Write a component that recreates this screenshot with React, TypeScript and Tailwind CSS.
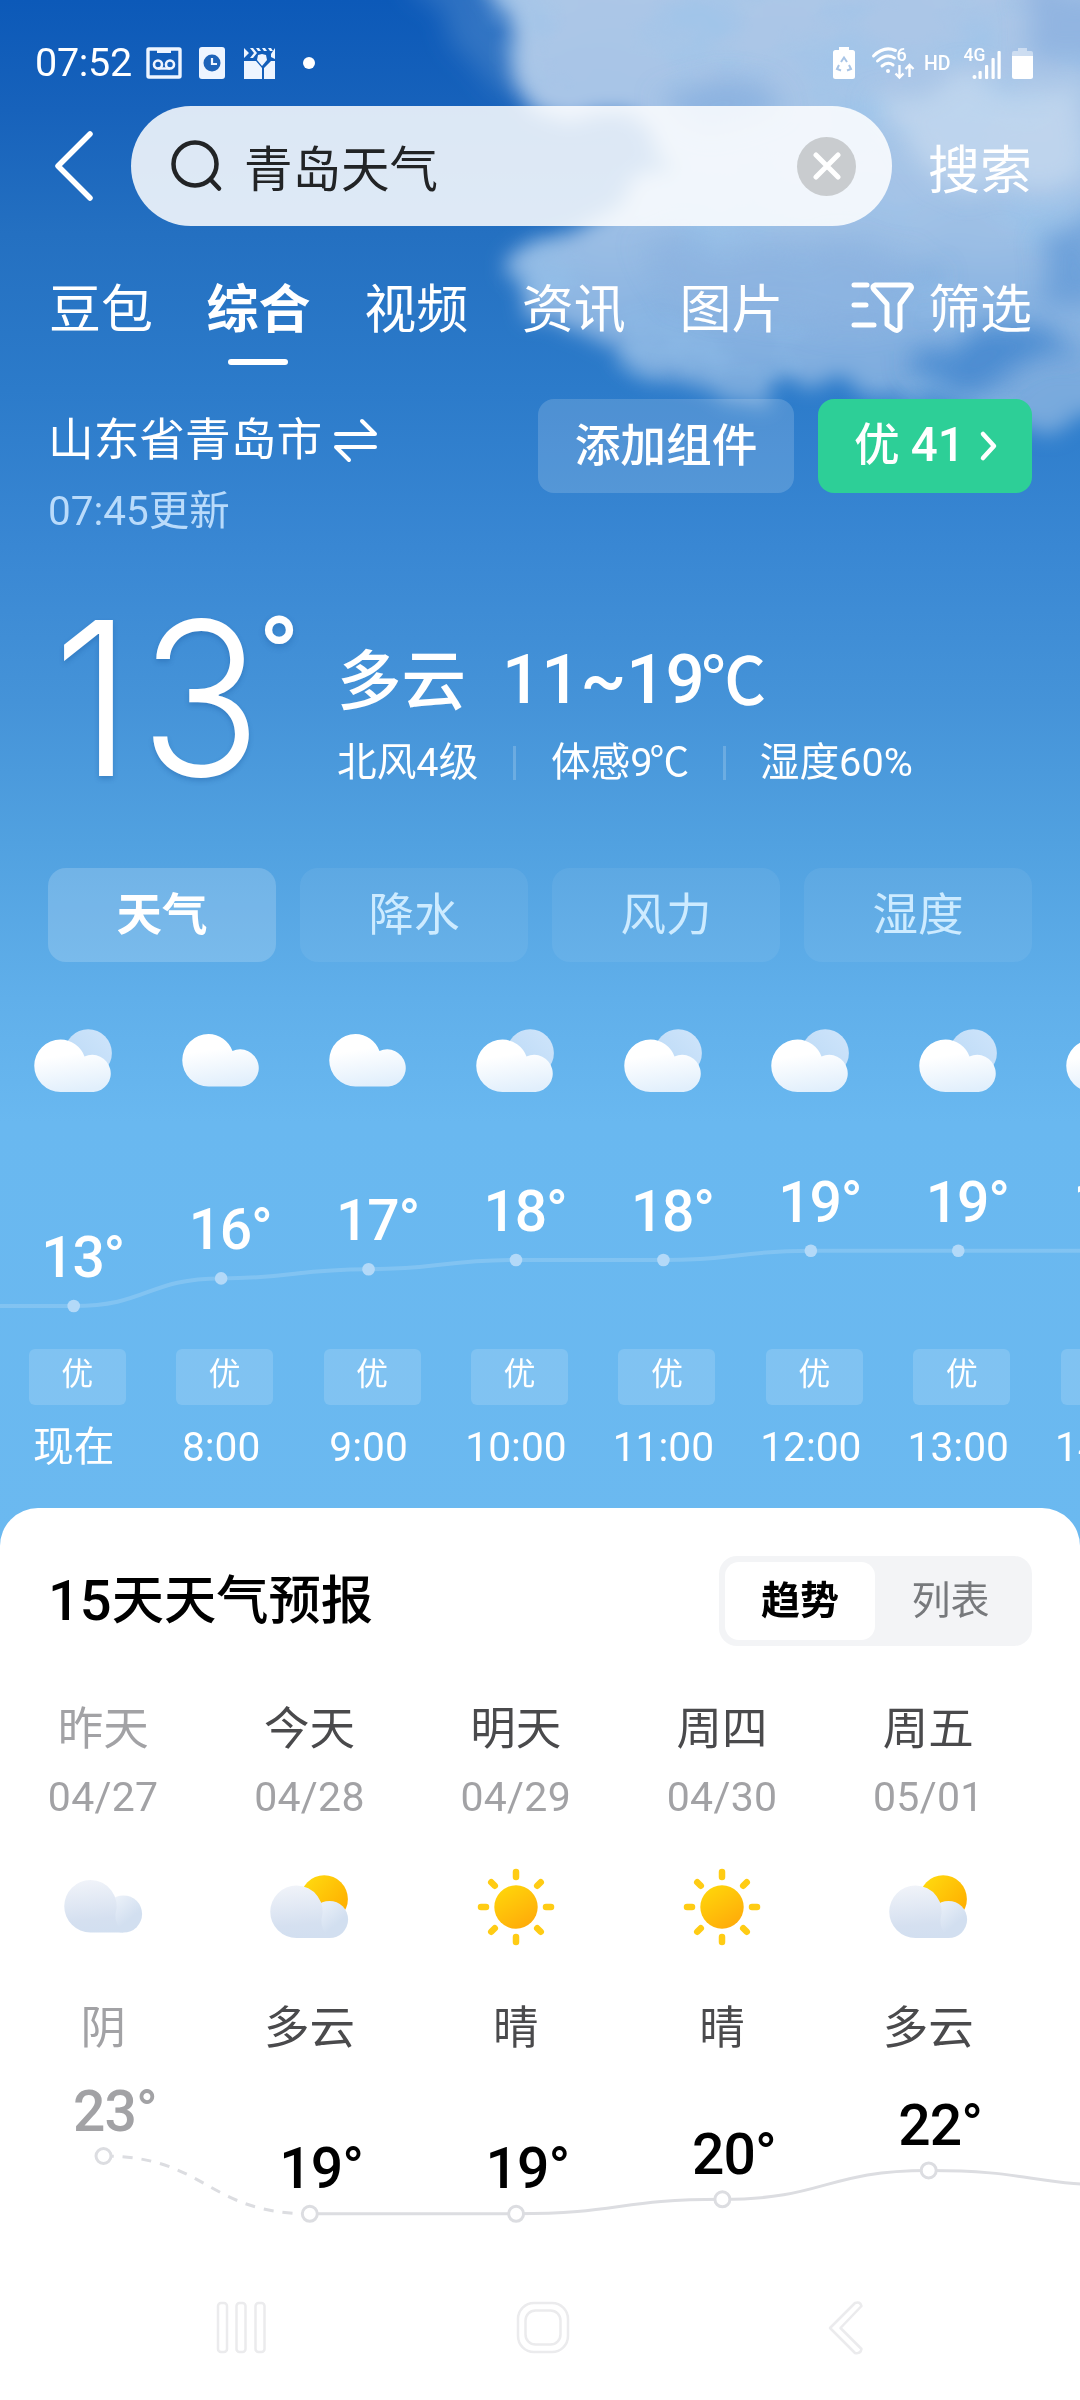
import clsx from 'clsx'

const tabs = ['豆包', '综合', '视频', '资讯', '图片']
const metrics = ['天气', '降水', '风力', '湿度']

type HourIcon = 'cloudy' | 'overcast'

const hours: { label: string; temp: number; icon: HourIcon }[] = [
  { label: '现在', temp: 13, icon: 'cloudy' },
  { label: '8:00', temp: 16, icon: 'overcast' },
  { label: '9:00', temp: 17, icon: 'overcast' },
  { label: '10:00', temp: 18, icon: 'cloudy' },
  { label: '11:00', temp: 18, icon: 'cloudy' },
  { label: '12:00', temp: 19, icon: 'cloudy' },
  { label: '13:00', temp: 19, icon: 'cloudy' },
  { label: '14:00', temp: 19, icon: 'cloudy' }
]

type DayIcon = 'overcast' | 'partly' | 'sunny'

const days: { day: string; date: string; icon: DayIcon; text: string; temp: number; past?: boolean }[] = [
  { day: '昨天', date: '04/27', icon: 'overcast', text: '阴', temp: 23, past: true },
  { day: '今天', date: '04/28', icon: 'partly', text: '多云', temp: 19 },
  { day: '明天', date: '04/29', icon: 'sunny', text: '晴', temp: 19 },
  { day: '周四', date: '04/30', icon: 'sunny', text: '晴', temp: 20 },
  { day: '周五', date: '05/01', icon: 'partly', text: '多云', temp: 22 }
]

const HOUR_W = 147.43
const DAY_W = 206.3

// outline of the big cloud bank in the top right corner
const CLOUD =
  'M485 -40 L505 45 L545 105 L640 125 L680 165 L600 218 L545 238 L516 275 L535 318 L600 330 L628 362 L690 394 L728 418 L762 418 L770 384 L806 372 L870 385 L930 405 L1020 420 L1120 420 L1120 -40 Z'

type Point = { x: number; y: number }

// horizontal tangents on both ends of each segment
function smooth(points: Point[]) {
  return points
    .map((p, i) => {
      if (i === 0) return `M${p.x} ${p.y}`
      const prev = points[i - 1]
      const mid = (prev.x + p.x) / 2
      return `C${mid} ${prev.y} ${mid} ${p.y} ${p.x} ${p.y}`
    })
    .join(' ')
}

function Sky() {
  return (
    <svg className="absolute inset-0" width="1080" height="1560" viewBox="0 0 1080 1560">
      <defs>
        <linearGradient id="sky" x1="0" y1="0" x2="0" y2="1">
          <stop offset="0" stopColor="#0c59b8" />
          <stop offset="0.07" stopColor="#1762bb" />
          <stop offset="0.15" stopColor="#2470c1" />
          <stop offset="0.25" stopColor="#2c7bca" />
          <stop offset="0.35" stopColor="#3987d3" />
          <stop offset="0.45" stopColor="#4593d8" />
          <stop offset="0.54" stopColor="#51a1e0" />
          <stop offset="0.64" stopColor="#60afea" />
          <stop offset="0.72" stopColor="#69b8f0" />
          <stop offset="1" stopColor="#6bb9f0" />
        </linearGradient>
        <linearGradient id="haze" gradientUnits="userSpaceOnUse" x1="0" y1="0" x2="0" y2="430">
          <stop offset="0" stopColor="#b4cce9" />
          <stop offset="0.45" stopColor="#abc8e9" />
          <stop offset="0.75" stopColor="#8cb5e2" />
          <stop offset="1" stopColor="#76a8dc" />
        </linearGradient>
        <filter id="rough" x="-20%" y="-20%" width="140%" height="140%">
          <feTurbulence type="fractalNoise" baseFrequency="0.014" numOctaves="5" seed="8" result="n" />
          <feDisplacementMap in="SourceGraphic" in2="n" scale="58" xChannelSelector="R" yChannelSelector="G" />
          <feGaussianBlur stdDeviation="10" />
        </filter>
        <filter id="soft" x="-40%" y="-40%" width="180%" height="180%">
          <feTurbulence type="fractalNoise" baseFrequency="0.018" numOctaves="4" seed="3" result="n" />
          <feDisplacementMap in="SourceGraphic" in2="n" scale="50" xChannelSelector="R" yChannelSelector="G" />
          <feGaussianBlur stdDeviation="13" />
        </filter>
        <filter id="wisps" x="-10%" y="-10%" width="120%" height="120%">
          <feTurbulence type="fractalNoise" baseFrequency="0.009 0.013" numOctaves="5" seed="21" />
          <feColorMatrix values="0 0 0 0 0.3  0 0 0 0 0.55  0 0 0 0 0.84  3.4 0 0 0 -1.65" result="tex" />
          <feGaussianBlur in="SourceGraphic" stdDeviation="16" result="shape" />
          <feComposite in="tex" in2="shape" operator="in" />
          <feGaussianBlur stdDeviation="2.5" />
        </filter>
      </defs>
      <rect width="1080" height="1560" fill="url(#sky)" />
      <g filter="url(#soft)">
        <path d="M420 -20 L510 -20 L550 110 L500 100 Z" fill="#7fa9dc" opacity="0.3" />
      </g>
      <g filter="url(#rough)">
        <path d={CLOUD} fill="url(#haze)" opacity="0.95" />
      </g>
      <path d={CLOUD} filter="url(#wisps)" opacity="0.4" />
      <g filter="url(#soft)">
        <path d="M1010 -10 L1110 -10 L1110 70 L1050 60 L1020 25 Z" fill="#8fb3e0" opacity="0.9" />
        <path d="M660 90 L770 85 L790 110 L690 130 Z" fill="#7aa6dc" opacity="0.6" />
        <path d="M640 240 L900 250 L880 330 L680 310 Z" fill="#8ab1e0" opacity="0.6" />
        <path d="M1045 240 L1110 200 L1110 300 L1040 290 Z" fill="#5e97d6" opacity="0.7" />
        <path d="M880 295 L935 262 L945 285 Z" fill="#5e97d6" opacity="0.6" />
        <path d="M920 345 L1030 320 L1080 350 L980 390 L910 380 Z" fill="#4386cf" opacity="0.85" />
        <path d="M860 95 L960 80 L1090 90 L1090 180 L960 200 L900 130 Z" fill="#cfdff2" opacity="0.6" />
      </g>
    </svg>
  )
}

function StatusBar() {
  return (
    <div className="flex h-[106px] items-center pl-[35px] pr-[47px] pt-[19px] text-white">
      <span className="w-[111px] text-[39.5px] tracking-[-0.3px]">07:52</span>
      <svg className="h-8" width="170" height="32" viewBox="0 0 170 32" fill="none">
        {/* voicemail card */}
        <rect x="2" y="2" width="32" height="28" stroke="#eef5ff" strokeWidth="3.4" rx="1" />
        <path d="M11 2h14v4H11z" fill="#eef5ff" />
        <circle cx="12" cy="17.500" r="4" stroke="#eef5ff" strokeWidth="2.600" />
        <circle cx="24" cy="17.500" r="4" stroke="#eef5ff" strokeWidth="2.600" />
        <path d="M12 21.500h12" stroke="#eef5ff" strokeWidth="2.400" />
        {/* clock card */}
        <rect x="53" y="0" width="26" height="32" rx="3" fill="#eef5ff" />
        <circle cx="66" cy="16" r="8.500" fill="#1e63b8" />
        <path d="M66 11v6h5" stroke="#eef5ff" strokeWidth="2.200" />
        {/* clapperboard */}
        <path
          d="M98 14h12l6 7v11H98zM129 14h-4l-7 7v11h11zM112 8l4-1 4 1 1 5-5 6-5-6zM98 1l5 5-5 5zM104 1h3l4 5-4 5h-3l4-5zM110 1h3l2 3h-3zM116 1h3l2 3h-3zM122 1h3l2 3h-3zM129 1v11l-4-2v-3z"
          fill="#eef5ff"
        />
        <circle cx="163" cy="16" r="6" fill="white" />
      </svg>
      <svg className="ml-auto overflow-visible" width="200" height="34" viewBox="833 45 200 34" fill="none">
        {/* battery saver */}
        <path d="M839 46h10v3h3.500q2.500 0 2.500 2.500v24q0 2.500-2.500 2.500h-17q-2.500 0-2.500-2.500v-24q0-2.500 2.500-2.500h3.500z" fill="white" />
        <path d="M841 61l3-4.500 3 4.500M849 64l2 4-4 1.500M839 64l-2 4 4 1.500" stroke="#a9c5e6" strokeWidth="2" />
        {/* wifi */}
        <g stroke="white" strokeWidth="3" strokeLinecap="round">
          <path d="M873.500 55q10.500-10.500 22-5.500M877.500 60q9-8 17-3M882 65q6-5 11-1" />
        </g>
        <circle cx="888" cy="70" r="2" fill="white" />
        <path d="M899.500 64v12M895.500 72.500l4 4 4-4M909.500 76v-12M905.500 68l4-4 4 4" stroke="white" strokeWidth="2.400" />
        <g fill="white" className="font-medium">
          <text x="896.500" y="60" fontSize="18">6</text>
          <text x="924" y="69" fontSize="19.500">HD</text>
          <text x="963.500" y="59.500" fontSize="17.500">4G</text>
        </g>
        {/* signal */}
        <g fill="white">
          <circle cx="974.500" cy="76" r="2" />
          <rect x="978.500" y="70" width="3.200" height="8" rx="1" />
          <rect x="985" y="64" width="3.200" height="14" rx="1" />
          <rect x="991.500" y="57" width="3.200" height="21" rx="1" />
          <rect x="997.500" y="50" width="3.200" height="28" rx="1" />
        </g>
        <path d="M1018 47h9v3h4q2 0 2 2v5h-21v-5q0-2 2-2h4z" fill="white" opacity="0.45" />
        <path d="M1012 55h21v20.500q0 2.500-2.500 2.500h-16q-2.500 0-2.500-2.500z" fill="white" />
      </svg>
    </div>
  )
}

function SearchRow() {
  return (
    <div className="flex h-[120px] items-center text-white">
      <svg className="ml-[53px]" width="40" height="72" viewBox="0 0 40 72" fill="none">
        <path d="M37 4L5 36l32 32" stroke="white" strokeWidth="5.500" strokeLinecap="round" strokeLinejoin="round" />
      </svg>
      <div className="ml-[38px] flex h-full w-[761px] items-center rounded-full bg-[#ffffffd9] pl-[40px] pr-[36px]">
        <svg width="52" height="52" viewBox="0 0 52 52" fill="none" stroke="#222426" strokeWidth="4.500" strokeLinecap="round">
          <circle cx="24" cy="24" r="21.500" />
          <path d="M39.500 39.500l8.500 9" />
        </svg>
        <span className="ml-[21px] mt-[11px] text-[48.500px] leading-none text-[#222426]">青岛天气</span>
        <div className="ml-auto flex size-[59px] items-center justify-center rounded-full bg-[#c9cccf]">
          <svg width="28" height="28" viewBox="0 0 28 28" stroke="white" strokeWidth="5" strokeLinecap="round">
            <path d="M3 3l22 22M25 3L3 25" />
          </svg>
        </div>
      </div>
      <span className="ml-[36px] mt-[12px] text-[52px] leading-none">搜索</span>
    </div>
  )
}

function TabBar() {
  return (
    <div className="flex h-[164px] items-center gap-[53.600px] pl-[49px] pt-[6px] text-[52px] leading-none text-white">
      {tabs.map((tab) => (
        <div key={tab} className={clsx('relative', tab === '综合' && 'font-bold')}>
          {tab}
          {tab === '综合' && <div className="absolute left-[21px] top-[74px] h-[6px] w-[60px] rounded-full bg-white" />}
        </div>
      ))}
      <div className="ml-auto flex items-center pr-[48px]">
        <svg className="mb-[8px] mr-[14px]" width="64" height="54" viewBox="0 0 64 54" fill="none" stroke="white" strokeWidth="5" strokeLinecap="round" strokeLinejoin="round">
          <path d="M4 5h13M4 25h12M4 45h20" />
          <path d="M25 5h34q3.500 1 2 4L50 24v24q-2 4-6 1.500l-7-5V24L23.500 9q-1.500-3 1.500-4z" />
        </svg>
        筛选
      </div>
    </div>
  )
}

function CurrentWeather() {
  return (
    <div className="h-[478px] px-[48px] pt-[9px] text-white">
      <div className="flex h-[150px] items-start">
        <div className="flex flex-col">
          <div className="flex h-[84px] items-center text-[45.700px] leading-none">
            山东省青岛市
            <svg className="mb-[2px] ml-[12px]" width="44" height="46" viewBox="0 0 44 46" fill="none" stroke="white" strokeWidth="4" strokeLinecap="round" strokeLinejoin="round">
              <path d="M2 17h39L28 4M41 30H2l13 13" />
            </svg>
          </div>
          <span className="mt-[8px] text-[40.500px] leading-none text-[#b9dbfb]">07:45更新</span>
        </div>
        <div className="ml-auto flex gap-[24px] text-[45.700px] font-medium leading-none">
          <div className="flex h-[94px] w-[256px] items-center justify-center rounded-2xl bg-[#ffffff29] pt-[2px]">添加组件</div>
          <div className="flex h-[94px] w-[214px] items-center rounded-2xl bg-[#2dcf97] pl-[36px]">
            优<span className="ml-[11px] text-[47.500px]">41</span>
            <svg className="ml-[14px]" width="20" height="32" viewBox="0 0 20 32" fill="none" stroke="white" strokeWidth="4.500" strokeLinecap="round" strokeLinejoin="round">
              <path d="M4 4l11 12L4 28" />
            </svg>
          </div>
        </div>
      </div>
      <div className="mt-[45px] flex">
        <div className="flex w-[289px] items-start pl-[5px] [text-shadow:0_3px_6px_rgba(20,80,150,0.3)]">
          <span className="w-[205px] origin-left scale-x-[0.94] whitespace-nowrap font-['Inter'] text-[214px] font-light leading-[210px] tracking-[8px]">13</span>
          <span className="mt-[9px] text-[110px] font-medium leading-[110px]">°</span>
        </div>
        <div className="pt-[53px]">
          <div className="flex h-[70px] items-center text-[64.500px] font-medium leading-none">
            多云<span className="-mt-[5px] ml-[36px] text-[69px]">11~19</span><span className="-ml-[3px]">℃</span>
          </div>
          <div className="mt-[26px] flex h-[40px] items-center text-[39.700px] leading-none">
            北风4级
            <div className="mx-[35px] h-[34px] w-[2.500px] bg-[#ffffff30]" />
            体感9<span className="-ml-[3px]">℃</span>
            <div className="ml-[34px] mr-[34px] h-[34px] w-[2.500px] bg-[#ffffff30]" />
            湿度60%
          </div>
        </div>
      </div>
    </div>
  )
}

function MetricTabs() {
  return (
    <div className="flex gap-[24px] px-[48px] leading-none">
      {metrics.map((m, i) => (
        <div
          key={m}
          className={clsx(
            'flex h-[94px] flex-1 items-center justify-center rounded-[18px] pt-[2px] text-[45.500px]',
            i === 0 ? 'bg-[#ffffff2e] font-bold text-white' : 'bg-[#ffffff10] text-[#cdebff]'
          )}
        >
          {m}
        </div>
      ))}
    </div>
  )
}

function HourCloud({ icon }: { icon: HourIcon }) {
  return (
    <svg width="79" height="64" viewBox="0 0 79 64">
      <defs>
        <linearGradient id="hc" gradientUnits="userSpaceOnUse" x1="30" y1="10" x2="38" y2="63">
          <stop offset="0.3" stopColor="#fff" />
          <stop offset="1" stopColor="#e1effc" />
        </linearGradient>
        <linearGradient id="hb" x1="1" y1="0" x2="0" y2="1">
          <stop offset="0" stopColor="#cfe5fb" />
          <stop offset="1" stopColor="#b9d8f5" />
        </linearGradient>
      </defs>
      {icon === 'cloudy' && <circle cx="54.200" cy="24" r="23.700" fill="url(#hb)" />}
      <path
        transform={icon === 'overcast' ? 'translate(0 -5.500)' : undefined}
        d="M26.500 10.500a26 26 0 0 1 24 17a18.600 18.600 0 1 1 9 35.500h-33a26.250 26.250 0 0 1 0-52.500z"
        fill="url(#hc)"
      />
    </svg>
  )
}

function Hourly() {
  const points = hours.map((h, i) => ({
    x: 73.7 + i * HOUR_W,
    y: 126 - (h.temp - 13) * 9.2
  }))
  return (
    <div className="w-[1080px] overflow-hidden pt-[67px] text-white">
      <div className="flex h-[66px] w-[1180px]">
        {hours.map((h) => (
          <div key={h.label} className="flex w-[147.430px] shrink-0 justify-center">
            <HourCloud icon={h.icon} />
          </div>
        ))}
      </div>
      <svg className="mt-[85px] block overflow-visible" width="1080" height="140" viewBox="0 0 1080 140" fill="none">
        <path d={smooth([{ x: -60, y: 126 }, ...points])} stroke="white" strokeOpacity="0.16" strokeWidth="4" />
        {points.map((p, i) => (
          <g key={p.x}>
            <circle cx={p.x} cy={p.y} r="6.300" fill="#b3d9f8" />
            <text x={p.x - 32.5} y={p.y - 29} fontSize="57" letterSpacing="-1.200" fill="white" className="font-medium">
              {hours[i].temp}°
            </text>
          </g>
        ))}
      </svg>
      <div className="mt-[29px] flex w-[1180px]">
        {hours.map((h) => (
          <div key={h.label} className="flex w-[147.430px] shrink-0 flex-col items-center leading-none">
            <div className="ml-[7px] flex h-[56px] w-[97px] justify-center rounded-md bg-[#ffffff26] pt-[9px] text-[32px]">优</div>
            <span className="mt-[22px] text-[40.700px]">{h.label}</span>
          </div>
        ))}
      </div>
    </div>
  )
}

function DayWeatherIcon({ icon }: { icon: DayIcon }) {
  if (icon === 'sunny') {
    return (
      <svg width="78" height="78" viewBox="-39 -39 78 78">
        <defs>
          <linearGradient id="sun" x1="0.2" y1="0" x2="0.8" y2="1">
            <stop offset="0" stopColor="#ffd60a" />
            <stop offset="1" stopColor="#ffa90a" />
          </linearGradient>
        </defs>
        <circle r="21.700" fill="url(#sun)" />
        {[0, 45, 90, 135, 180, 225, 270, 315].map((a) => (
          <path key={a} d="M0 -35V-30" transform={`rotate(${a})`} stroke="#ffcc14" strokeWidth="6.500" strokeLinecap="round" />
        ))}
      </svg>
    )
  }
  return (
    <svg width="79" height="64" viewBox="0 0 79 64">
      <defs>
        <linearGradient id="dayBig" x1="0.4" y1="0" x2="0.5" y2="1">
          <stop offset="0" stopColor="#f0f3f9" />
          <stop offset="0.75" stopColor="#d5e0f0" />
          <stop offset="1" stopColor="#d2dff0" />
        </linearGradient>
        <linearGradient id="daySmall" x1="0.1" y1="0.1" x2="0.6" y2="0.7">
          <stop offset="0" stopColor="#eef3fa" />
          <stop offset="1" stopColor="#d2dff0" />
        </linearGradient>
        <linearGradient id="daySun" x1="0.1" y1="0.1" x2="0.9" y2="0.8">
          <stop offset="0" stopColor="#ffd90f" />
          <stop offset="1" stopColor="#ffae00" />
        </linearGradient>
      </defs>
      {icon === 'partly' && <circle cx="54.200" cy="24" r="23.700" fill="url(#daySun)" />}
      <g transform={icon === 'overcast' ? 'translate(0 -5.500)' : undefined}>
        <circle cx="59.500" cy="44.500" r="18.600" fill="url(#daySmall)" />
        <path d="M26.500 10.500a26.200 26.200 0 0 1 25 34q-1 10 8 18.500h-33a26.250 26.250 0 0 1 0-52.500z" fill="url(#dayBig)" />
      </g>
    </svg>
  )
}

function Forecast() {
  const points = days.map((d, i) => ({
    x: 103.5 + i * DAY_W,
    y: 70 + (23 - d.temp) * 14.45
  }))
  const next = { x: 103.5 + 5 * DAY_W, y: 100 }
  return (
    <div className="h-[892px] w-full rounded-t-[38px] bg-white pt-[48px]">
      <div className="flex h-[90px] items-center justify-between px-[48px] leading-none">
        <h2 className="flex items-center text-[52.300px] font-medium text-black">
          <span className="text-[56px]">15</span>天天气预报
        </h2>
        <div className="flex h-[90px] w-[313px] rounded-[18px] bg-[#f3f4f6] p-[6px] text-[39px]">
          <div className="flex w-[150px] items-center justify-center rounded-[14px] bg-white font-bold text-black">趋势</div>
          <div className="flex w-[151px] items-center justify-center text-[#77797c]">列表</div>
        </div>
      </div>
      <div className="flex leading-none">
        {days.map((d) => (
          <div key={d.day} className="flex w-[206.300px] flex-col items-center">
            <div className={clsx('mt-[61px] text-[45.500px]', d.past ? 'text-[#a2a2a5]' : 'text-[#4a4a4c]')}>{d.day}</div>
            <div className="mt-[24px] text-[41px] tracking-[0.300px] text-[#a2a2a5]">{d.date}</div>
            <div className="mt-[49px] flex h-[80px] items-center">
              <DayWeatherIcon icon={d.icon} />
            </div>
            <div className={clsx('mt-[59px] text-[45.500px]', d.past ? 'text-[#a2a2a5]' : 'text-[#4a4a4c]')}>{d.text}</div>
          </div>
        ))}
      </div>
      <svg className="mt-[35px] block overflow-visible" width="1080" height="150" viewBox="0 0 1080 150" fill="none">
        <path d={smooth(points.slice(0, 2))} stroke="#dcdde1" strokeWidth="3" strokeDasharray="10 9" />
        <path d={smooth([...points.slice(1), next])} stroke="#dcdde1" strokeWidth="3" />
        {points.map((p, i) => (
          <g key={p.x}>
            <circle cx={p.x} cy={p.y} r="7.500" fill="white" stroke="#dcdde1" strokeWidth="3" />
            <text x={p.x - 30.5} y={p.y - 25.500} fontSize="57" letterSpacing="-0.900" fill={days[i].past ? '#a2a2a5' : '#000'} className="font-medium">
              {days[i].temp}°
            </text>
          </g>
        ))}
      </svg>
    </div>
  )
}

function NavBar() {
  return (
    <div className="absolute inset-x-0 bottom-0 flex h-[144px] items-center">
      <svg width="1080" height="60" viewBox="0 0 1080 60" fill="none" stroke="#ebebed" strokeWidth="2.500">
        <rect x="218" y="5" width="9" height="49" rx="3" />
        <rect x="236.500" y="5" width="9" height="49" rx="3" />
        <rect x="255.500" y="5" width="9" height="49" rx="3" />
        <rect x="518" y="5" width="50" height="49" rx="16" />
        <rect x="525.500" y="12.500" width="35" height="34" rx="10" />
        <path d="M855 5q5-2 6.500 3L840.500 30l21 21q-1 5-6.500 4L830 30z" strokeLinejoin="round" />
      </svg>
    </div>
  )
}

export default function App() {
  return (
    <div className="relative h-[2400px] w-[1080px] overflow-hidden bg-white font-['Roboto','Noto_Sans_CJK_SC',sans-serif]">
      <Sky />
      <div className="relative flex h-[2400px] flex-col">
        <div className="h-[1508px] shrink-0">
          <StatusBar />
          <SearchRow />
          <TabBar />
          <CurrentWeather />
          <MetricTabs />
          <Hourly />
        </div>
        <Forecast />
        <NavBar />
      </div>
    </div>
  )
}
